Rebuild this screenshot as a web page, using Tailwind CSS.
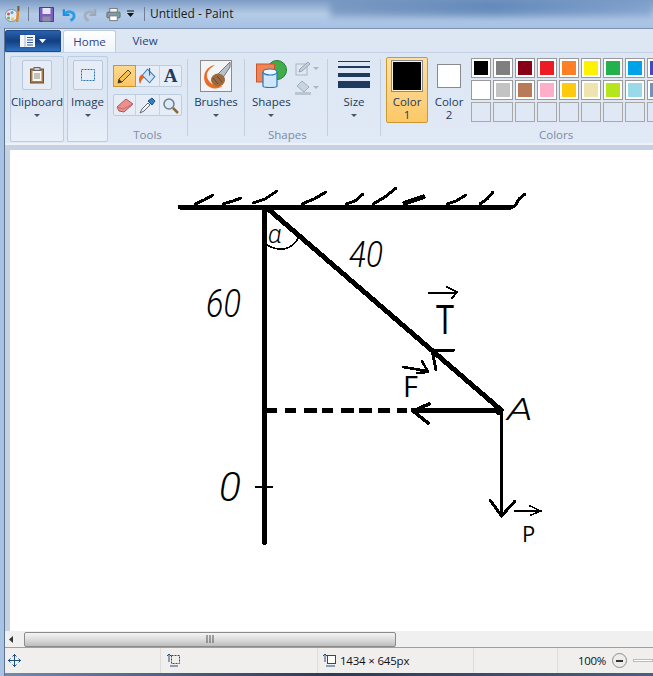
<!DOCTYPE html>
<html>
<head>
<meta charset="utf-8">
<script src="https://cdn.jsdelivr.net/npm/@tailwindcss/browser@4"></script>
</head>
<body class="m-0">
<div class="w-[653px] h-[676px] overflow-hidden flex flex-col bg-[#a9c3e4] font-['Open_Sans',sans-serif] relative">
  <!-- title bar -->
  <div class="h-[28px] shrink-0 flex items-center relative bg-gradient-to-b from-[#7d9cc4] via-[#b4cbe6] to-[#a6c1e4]">
    <div class="absolute left-[330px] top-0 w-[323px] h-[17px] bg-gradient-to-r from-[#6f8fbb] via-[#4f79b0] to-[#7b9ccb] blur-[3px] opacity-70"></div>
    <div class="relative flex items-center pl-[5px] h-full">
      <svg width="16" height="18" viewBox="0 0 16 18" class="shrink-0"><ellipse cx="6.500" cy="10.500" rx="6.500" ry="6" fill="#e3e9f0" stroke="#7e8ea3"/><circle cx="3.500" cy="9" r="1.500" fill="#d9534f"/><circle cx="7" cy="7.500" r="1.500" fill="#4aa3df"/><circle cx="3.500" cy="13" r="1.500" fill="#5bb85d"/><circle cx="7.500" cy="14" r="1.500" fill="#f0c040"/><path d="M13 6 L12 17" stroke="#e08a2b" stroke-width="2.500"/><path d="M13.400 1v5" stroke="#7a5a30" stroke-width="2"/></svg>
      <div class="w-px h-[14px] bg-[#6f7f93] ml-[7px]"></div>
      <svg width="15" height="15" viewBox="0 0 15 15" class="ml-[10px] shrink-0"><path d="M.5.5h14v14H.5z" fill="#7a5fc0" stroke="#4d3a8c"/><rect x="3.500" y="1" width="8" height="6" fill="#e9e4f6"/><rect x="3.500" y="9.500" width="8" height="5" fill="#8f8f9f"/></svg>
      <svg width="14" height="15" viewBox="0 0 15 15" class="ml-[8px] shrink-0"><path d="M2 2v6h6" fill="none" stroke="#1f8fdd" stroke-width="2.400"/><path d="M3 7c3-4 10-3 10 2 0 3-2 4-4 5" fill="none" stroke="#2d9ce6" stroke-width="3"/></svg>
      <svg width="14" height="15" viewBox="0 0 15 15" class="ml-[7px] shrink-0"><path d="M13 2v6H7" fill="none" stroke="#9ca8b6" stroke-width="2.400"/><path d="M12 7C9 3 2 4 2 9c0 3 2 4 4 5" fill="none" stroke="#a4afbc" stroke-width="3"/></svg>
      <svg width="15" height="15" viewBox="0 0 16 15" class="ml-[9px] shrink-0"><rect x="4" y="1" width="8" height="5" fill="#f4f4f4" stroke="#777"/><rect x="1" y="5" width="14" height="6" rx="1" fill="#8c98a6" stroke="#5f6a78"/><rect x="4" y="9" width="8" height="5" fill="#fff" stroke="#777"/><rect x="11" y="6.500" width="2" height="1.500" fill="#38c172"/></svg>
      <svg width="8" height="8" viewBox="0 0 8 8" class="ml-[6px] shrink-0"><path d="M0 1h7" stroke="#111"/><path d="M0 3h7L3.500 7z" fill="#111"/></svg>
      <div class="w-px h-[14px] bg-[#6f7f93] ml-[9px]"></div>
      <span class="ml-[5px] text-[12px] text-[#1b1b1b]">Untitled - Paint</span>
    </div>
  </div>
  <div class="flex-1 min-h-0 ml-[4px] border-l border-[#5e7592] flex flex-col bg-[#c9d4e5]">
    <!-- tabs -->
    <div class="h-[24px] shrink-0 flex items-end bg-[#dde7f4] border-t border-[#7f93ae]">
      <div class="w-[56px] h-[22px] shrink-0 rounded-t-[2px] bg-gradient-to-b from-[#2b62ad] via-[#123f82] to-[#2f72bd] border border-[#1d4a8a] flex items-center justify-center gap-[4px]">
        <svg width="15" height="12" viewBox="0 0 15 12"><rect width="15" height="12" fill="#f4f7fb"/><path d="M5 0v12" stroke="#aab7c8"/><path d="M7 2.500h6M7 5h6M7 7.500h6M7 10h6" stroke="#2c5a98"/></svg>
        <svg width="7" height="4" viewBox="0 0 7 4"><path d="M0 0h7L3.500 4z" fill="#fff"/></svg>
      </div>
      <div class="w-[53px] h-[22px] shrink-0 ml-[2px] rounded-t-[3px] bg-gradient-to-b from-white to-[#eef3fa] border border-b-0 border-[#bccce0] flex items-center justify-center text-[11.500px] text-[#2c3f8f]">Home</div>
      <div class="w-[50px] h-[22px] shrink-0 ml-[4px] flex items-center justify-center text-[11.500px] text-[#1e4474]">View</div>
    </div>
    <!-- ribbon -->
    <div class="h-[91px] shrink-0 flex pl-[5px] pt-[3px] bg-gradient-to-b from-[#dde7f4] to-[#e0e9f5] border-t border-[#c3d2e6] text-[#1e395b] text-[11.500px] leading-[14px]">
      <div class="w-[54px] h-[86px] shrink-0 rounded-[2px] border border-[#bccde2] bg-gradient-to-b from-[#dde7f4] via-[#dde7f4] to-[#e8eff8] flex flex-col items-center pt-[3px]">
        <div class="w-[30px] h-[30px] border border-[#b9c8dc] rounded-[2px] bg-[#e6edf7] flex items-center justify-center">
          <svg width="14" height="17" viewBox="0 0 14 17"><rect x=".5" y="2" width="13" height="14" fill="#a87c4f" stroke="#6f5030"/><rect x="2.500" y="4" width="9" height="10" fill="#fbf8ef"/><path d="M4 7h6M4 9h6M4 11h6" stroke="#8c8c8c"/><rect x="4" y="0.500" width="6" height="3" fill="#c9ccd1" stroke="#666"/></svg>
        </div>
        <span class="mt-[5px]">Clipboard</span>
        <svg width="6" height="3" viewBox="0 0 6 3" class="mt-[5px]"><path d="M0 0h6L3 3z" fill="#44546a"/></svg>
      </div>
      <div class="w-[41px] h-[86px] shrink-0 ml-[3px] rounded-[2px] border border-[#bccde2] bg-gradient-to-b from-[#dde7f4] via-[#dde7f4] to-[#e8eff8] flex flex-col items-center pt-[3px]">
        <div class="w-[30px] h-[30px] border border-[#b9c8dc] rounded-[2px] bg-[#e6edf7] flex items-center justify-center">
          <svg width="14" height="12" viewBox="0 0 14 12"><rect x=".5" y=".5" width="13" height="11" fill="none" stroke="#2d6fb5" stroke-dasharray="2 1"/></svg>
        </div>
        <span class="mt-[5px]">Image</span>
        <svg width="6" height="3" viewBox="0 0 6 3" class="mt-[5px]"><path d="M0 0h6L3 3z" fill="#44546a"/></svg>
      </div>
      <!-- tools -->
      <div class="w-[69px] shrink-0 ml-[5px] flex flex-col items-center">
        <div class="mt-[9px] w-[69px] h-[22px] flex border border-[#bccde2] rounded-[2px] bg-[#e6edf7]">
          <div class="w-[23px] -m-px h-[22px] bg-gradient-to-b from-[#fdd98d] to-[#fdc566] border border-[#c8972e] flex items-center justify-center">
            <svg width="17" height="17" viewBox="0 0 17 17"><path d="M2 15l1-4L12 2l3 3-9 9z" fill="#f2c14e" stroke="#5f4a1e"/><path d="M2 15l1-4 3 3z" fill="#333"/></svg>
          </div>
          <div class="w-[24px] ml-px h-full border-r border-[#c6d3e4] flex items-center justify-center">
            <svg width="20" height="18" viewBox="0 0 19 17"><path d="M9 2l7 7-5 6-7-7z" fill="#cfe3f5" stroke="#3d7fbd"/><path d="M11 1v7" stroke="#555"/><path d="M4 7C1 8 0 12 2 16c1-2 1-4 4-6z" fill="#e8641e"/></svg>
          </div>
          <div class="flex-1 flex items-center justify-center text-[19px] font-bold font-['Liberation_Serif',serif] text-[#1f3b63]">A</div>
        </div>
        <div class="mt-[7px] w-[69px] h-[22px] flex border border-[#bccde2] rounded-[2px] bg-[#e6edf7]">
          <div class="w-[22px] h-full border-r border-[#c6d3e4] flex items-center justify-center">
            <svg width="18" height="15" viewBox="0 0 18 15"><path d="M1 9l9-8 7 5-9 8-5-1z" fill="#ec8f8d" stroke="#a65b5a"/><path d="M1 9l6 2 10-5" fill="none" stroke="#c46f6e"/></svg>
          </div>
          <div class="w-[24px] h-full border-r border-[#c6d3e4] flex items-center justify-center">
            <svg width="17" height="17" viewBox="0 0 17 17"><path d="M1 16l2-4 6-6 2 2-6 6z" fill="#f2f6fb" stroke="#667"/><path d="M9 4l4-3 3 3-3 4z" fill="#2f80c9" stroke="#1d4f82"/></svg>
          </div>
          <div class="flex-1 flex items-center justify-center">
            <svg width="17" height="17" viewBox="0 0 17 17"><circle cx="7" cy="7" r="5" fill="#dceaf6" stroke="#6f7f8f" stroke-width="1.500"/><path d="M11 11l5 5" stroke="#8a6a3a" stroke-width="2.500"/></svg>
          </div>
        </div>
        <span class="mt-[12px] text-[#7c8ba3]">Tools</span>
      </div>
      <div class="w-px h-[77px] shrink-0 mt-[3px] ml-[5px] bg-[#c1cfe1]"></div>
      <!-- brushes -->
      <div class="w-[56px] shrink-0 flex flex-col items-center pt-[4px]">
        <div class="w-[32px] h-[32px] border border-[#8c8c8c] bg-[#f2f4f7] flex items-center justify-center">
          <svg width="30" height="30" viewBox="0 0 30 30"><path d="M14 4C6 5 0 14 5 23c4 5 11 6 17 2-7 1-14-2-16-9-1-5 3-9 8-12z" fill="#ec6a24"/><path d="M29 1L17 13l4 5L29 6z" fill="#b8c0c8" stroke="#6f7680"/><ellipse cx="17" cy="19" rx="7" ry="6.500" fill="#9b6a3f"/><path d="M12 17l5 6M16 15l5 6" stroke="#6f4822"/></svg>
        </div>
        <span class="mt-[3px]">Brushes</span>
        <svg width="6" height="3" viewBox="0 0 6 3" class="mt-[5px]"><path d="M0 0h6L3 3z" fill="#44546a"/></svg>
      </div>
      <div class="w-px h-[77px] shrink-0 mt-[3px] bg-[#c1cfe1]"></div>
      <!-- shapes -->
      <div class="w-[82px] shrink-0 flex flex-col items-center relative">
        <div class="flex w-full pl-[11px] pt-[4px]">
          <div class="w-[31px] flex flex-col items-center">
            <svg width="31" height="30" viewBox="0 0 31 30"><circle cx="21" cy="10" r="9.500" fill="#3fae4a" stroke="#2a7a33"/><rect x=".5" y="4" width="18" height="18" fill="#f08455" stroke="#c8542a"/><path d="M7 12v14c0 2 14 2 14 0V12" fill="#cfe7fa" stroke="#2a75bd" stroke-width="1.200"/><ellipse cx="14" cy="12" rx="7" ry="3" fill="#eef7fe" stroke="#2a75bd" stroke-width="1.200"/></svg>
          </div>
          <div class="ml-[8px] flex flex-col gap-[4px] pt-[1px]">
            <div class="flex items-center gap-[2px]">
              <svg width="16" height="15" viewBox="0 0 16 15"><rect x="1" y="3" width="11" height="11" fill="none" stroke="#a9b6c6"/><path d="M4 11l1-3 8-7 2 2-8 7z" fill="#c4d0de" stroke="#94a2b3"/></svg>
              <svg width="6" height="3" viewBox="0 0 6 3"><path d="M0 0h6L3 3z" fill="#a9b6c6"/></svg>
            </div>
            <div class="flex items-center gap-[2px]">
              <svg width="16" height="15" viewBox="0 0 16 15"><path d="M7 1l7 6-5 5-7-6z" fill="#c9d4e1" stroke="#9fadbd"/><rect x="0" y="12" width="16" height="3" fill="#b9c5d3"/></svg>
              <svg width="6" height="3" viewBox="0 0 6 3"><path d="M0 0h6L3 3z" fill="#a9b6c6"/></svg>
            </div>
          </div>
        </div>
        <span class="absolute left-[7px] top-[39px]">Shapes</span>
        <svg width="6" height="3" viewBox="0 0 6 3" class="absolute left-[23px] top-[58px]"><path d="M0 0h6L3 3z" fill="#44546a"/></svg>
        <span class="absolute left-[23px] top-[72px] text-[#7c8ba3]">Shapes</span>
      </div>
      <div class="w-px h-[77px] shrink-0 mt-[3px] bg-[#c1cfe1]"></div>
      <!-- size -->
      <div class="w-[52px] shrink-0 flex flex-col items-center pt-[5px]">
        <div class="w-[32px] flex flex-col">
          <div class="h-px bg-[#1f3a5f]"></div>
          <div class="h-[2px] mt-[4px] bg-[#1f3a5f]"></div>
          <div class="h-[4px] mt-[5px] bg-[#1f3a5f]"></div>
          <div class="h-[7px] mt-[4px] bg-[#1f3a5f]"></div>
        </div>
        <span class="mt-[7px]">Size</span>
        <svg width="6" height="3" viewBox="0 0 6 3" class="mt-[5px]"><path d="M0 0h6L3 3z" fill="#44546a"/></svg>
      </div>
      <div class="w-px h-[77px] shrink-0 mt-[3px] bg-[#c1cfe1]"></div>
      <!-- colours -->
      <div class="w-[42px] h-[66px] shrink-0 ml-[5px] mt-px rounded-[2px] border border-[#cb9a2f] bg-gradient-to-b from-[#fde0a3] to-[#fdc866] flex flex-col items-center pt-[2px] text-center">
        <div class="w-[32px] h-[32px] bg-black border border-[#8a8a8a] outline outline-1 outline-[#fff2cf] outline-offset-[-2px]"></div>
        <span class="mt-[3px] leading-[13px]">Color<br>1</span>
      </div>
      <div class="w-[42px] h-[66px] shrink-0 mt-px flex flex-col items-center pt-[7px] text-center">
        <div class="w-[24px] h-[24px] bg-white border border-[#8a8a8a]"></div>
        <span class="mt-[7px] leading-[13px]">Color<br>2</span>
      </div>
      <div class="ml-[1px] mt-[2px] w-[196px] shrink-0 flex flex-col">
        <div class="grid grid-cols-[repeat(9,20px)] gap-[2px]">
          <div class="h-[20px] p-[2px] border border-[#9a9a9a] bg-white"><div class="h-full bg-[#000000]"></div></div>
          <div class="h-[20px] p-[2px] border border-[#9a9a9a] bg-white"><div class="h-full bg-[#7f7f7f]"></div></div>
          <div class="h-[20px] p-[2px] border border-[#9a9a9a] bg-white"><div class="h-full bg-[#880015]"></div></div>
          <div class="h-[20px] p-[2px] border border-[#9a9a9a] bg-white"><div class="h-full bg-[#ed1c24]"></div></div>
          <div class="h-[20px] p-[2px] border border-[#9a9a9a] bg-white"><div class="h-full bg-[#ff7f27]"></div></div>
          <div class="h-[20px] p-[2px] border border-[#9a9a9a] bg-white"><div class="h-full bg-[#fff200]"></div></div>
          <div class="h-[20px] p-[2px] border border-[#9a9a9a] bg-white"><div class="h-full bg-[#22b14c]"></div></div>
          <div class="h-[20px] p-[2px] border border-[#9a9a9a] bg-white"><div class="h-full bg-[#00a2e8]"></div></div>
          <div class="h-[20px] p-[2px] border border-[#9a9a9a] bg-white"><div class="h-full bg-[#3f48cc]"></div></div>
          <div class="h-[20px] p-[2px] border border-[#9a9a9a] bg-white"><div class="h-full bg-[#ffffff]"></div></div>
          <div class="h-[20px] p-[2px] border border-[#9a9a9a] bg-white"><div class="h-full bg-[#c3c3c3]"></div></div>
          <div class="h-[20px] p-[2px] border border-[#9a9a9a] bg-white"><div class="h-full bg-[#b97a57]"></div></div>
          <div class="h-[20px] p-[2px] border border-[#9a9a9a] bg-white"><div class="h-full bg-[#ffaec9]"></div></div>
          <div class="h-[20px] p-[2px] border border-[#9a9a9a] bg-white"><div class="h-full bg-[#ffc90e]"></div></div>
          <div class="h-[20px] p-[2px] border border-[#9a9a9a] bg-white"><div class="h-full bg-[#efe4b0]"></div></div>
          <div class="h-[20px] p-[2px] border border-[#9a9a9a] bg-white"><div class="h-full bg-[#b5e61d]"></div></div>
          <div class="h-[20px] p-[2px] border border-[#9a9a9a] bg-white"><div class="h-full bg-[#99d9ea]"></div></div>
          <div class="h-[20px] p-[2px] border border-[#9a9a9a] bg-white"><div class="h-full bg-[#7092be]"></div></div>
          <div class="h-[20px] border border-[#a8a8a8]"></div>
          <div class="h-[20px] border border-[#a8a8a8]"></div>
          <div class="h-[20px] border border-[#a8a8a8]"></div>
          <div class="h-[20px] border border-[#a8a8a8]"></div>
          <div class="h-[20px] border border-[#a8a8a8]"></div>
          <div class="h-[20px] border border-[#a8a8a8]"></div>
          <div class="h-[20px] border border-[#a8a8a8]"></div>
          <div class="h-[20px] border border-[#a8a8a8]"></div>
          <div class="h-[20px] border border-[#a8a8a8]"></div>
        </div>
        <span class="mt-[6px] pl-[68px] text-[#7c8ba3]">Colors</span>
      </div>
    </div>
    <div class="h-[2px] shrink-0 bg-[#edf2f9]"></div>
    <!-- canvas workspace -->
    <div class="flex-1 min-h-0 pl-[5px] pt-[5px] bg-[#c6d1e2]">
      <div class="w-full h-full bg-white relative overflow-hidden">
        <svg width="643" height="482" viewBox="10 150 643 482" class="block" fill="none" stroke="#000" stroke-linecap="round" stroke-linejoin="round" shape-rendering="crispEdges">
          <path d="M180 207H511" stroke-width="5"/>
          <path d="M195 204L204 200L213 195M223 204L233 201L241 198M253 203L265 199L277 191M302 204L314 199L326 192M346 204L355 201L363 194M373 204L385 197L396 188M447 204L456 201L466 195M480 204L487 199L493 192M505 208L515 206L519 199L525 194" stroke-width="3"/>
          <path d="M405 203L423 197" stroke-width="5"/>
          <path d="M264.500 207V543" stroke-width="4.500"/>
          <path d="M267 208L501 410" stroke-width="5"/>
          <path d="M267 245C278 251 291 252 299 237" stroke-width="1.500"/>
          <path d="M429 293H456M447 287L457 292L452 298" stroke-width="2"/>
          <path d="M432 350H454M432 350L436 370" stroke-width="3"/>
          <path d="M403 367L427 371M422 361L428 372L417 373" stroke-width="2.500"/>
          <path d="M267 410H277M285 410H296M304 410H317M322 410H333M341 410H354M359 410H372M378 410H390M397 410H407" stroke-width="5" stroke-linecap="butt"/>
          <path d="M413 410H501" stroke-width="5"/>
          <path d="M429 404L413 411L428 423" stroke-width="3.500"/>
          <circle cx="499" cy="411" r="4" fill="#000" stroke="none"/>
          <path d="M501.500 410V515M490 500L501.500 516L515 501" stroke-width="3"/>
          <path d="M515 511H540M530 506L541 511L531 515" stroke-width="1.500"/>
          <path d="M256 487H272" stroke-width="2.500"/>
          <g fill="#000" stroke="none" shape-rendering="auto">
            <text x="206" y="317" textLength="35" lengthAdjust="spacingAndGlyphs" class="text-[39px] italic font-light font-['Roboto',sans-serif]">60</text>
            <text x="349" y="267" textLength="34" lengthAdjust="spacingAndGlyphs" class="text-[37px] italic font-light font-['Roboto',sans-serif]">40</text>
            <text x="219" y="501" textLength="22" lengthAdjust="spacingAndGlyphs" class="text-[41px] italic font-light font-['Roboto',sans-serif]">0</text>
            <text x="507" y="420" textLength="26" lengthAdjust="spacingAndGlyphs" class="text-[32px] italic font-light font-['Roboto',sans-serif]">A</text>
            <text x="268" y="243" class="text-[25px] italic font-light font-['Roboto',sans-serif]">α</text>
            <text x="436" y="334" textLength="18" lengthAdjust="spacingAndGlyphs" class="text-[40px] font-['Open_Sans',sans-serif]">T</text>
            <text x="403" y="397" class="text-[29px] font-['Open_Sans',sans-serif]">F</text>
            <text x="522" y="542" class="text-[22px] font-['Open_Sans',sans-serif]">P</text>
          </g>
        </svg>
      </div>
    </div>
    <!-- scrollbar -->
    <div class="h-[16px] shrink-0 flex items-center bg-[#f0f0f0]">
      <svg width="4" height="7" viewBox="0 0 4 7" class="ml-[4px]"><path d="M4 0v7L0 3.500z" fill="#333"/></svg>
      <div class="ml-[11px] w-[372px] h-[15px] rounded-[2px] border border-[#8b8b8b] bg-gradient-to-b from-[#f4f4f4] via-[#dcdcdc] to-[#bdbdbd] flex items-center justify-center">
        <svg width="8" height="8" viewBox="0 0 8 8"><path d="M1 0v8M4 0v8M7 0v8" stroke="#555"/></svg>
      </div>
    </div>
    <!-- status bar -->
    <div class="h-[26px] shrink-0 flex items-center bg-[#f1eeee] border-t border-[#8ea3bb] text-[11.500px] text-[#111] relative">
      <div class="w-[156px] h-full border-r border-[#dcdcdc] flex items-center pl-[3px]">
        <svg width="13" height="13" viewBox="0 0 13 13"><path d="M6.500 0v13M0 6.500h13" stroke="#1f4f82"/><path d="M4.500 2.500l2-2 2 2M4.500 10.500l2 2 2-2M2.500 4.500l-2 2 2 2M10.500 4.500l2 2-2 2" stroke="#1f4f82" fill="none"/></svg>
      </div>
      <div class="w-[157px] h-full border-r border-[#dcdcdc] flex items-center pl-[6px]">
        <svg width="14" height="14" viewBox="0 0 14 14"><rect x="4.500" y="1.500" width="8" height="8" fill="none" stroke="#1f4f82" stroke-dasharray="2 1"/><path d="M2 0v8M0 2l2-2 2 2M3 12h8" stroke="#1f4f82" fill="none"/></svg>
      </div>
      <div class="w-[156px] h-full border-r border-[#dcdcdc] flex items-center pl-[5px] gap-[3px]">
        <svg width="14" height="14" viewBox="0 0 14 14"><rect x="4.500" y="1.500" width="8" height="8" fill="#fff" stroke="#1f4f82"/><path d="M2 0v8M0 2l2-2 2 2M3 12h9" stroke="#1f4f82" fill="none"/></svg>
        <span class="tracking-[-.2px]">1434 × 645px</span>
      </div>
      <div class="w-[84px] h-full border-r border-[#dcdcdc]"></div>
      <span class="ml-[20px] tracking-[-.3px]">100%</span>
      <div class="ml-[6px] w-[15px] h-[15px] shrink-0 rounded-full border border-[#8d8d8d] bg-[#ececec] flex items-center justify-center"><div class="w-[7px] h-[2px] bg-[#333]"></div></div>
      <div class="ml-[6px] w-[20px] h-[3px] shrink-0 border border-[#bbb] bg-white"></div>
    </div>
    <div class="h-[3px] shrink-0 bg-gradient-to-r from-[#6f8ab0] via-[#2d3a55] to-[#4a5f80]"></div>
  </div>
</div>
</body>
</html>
